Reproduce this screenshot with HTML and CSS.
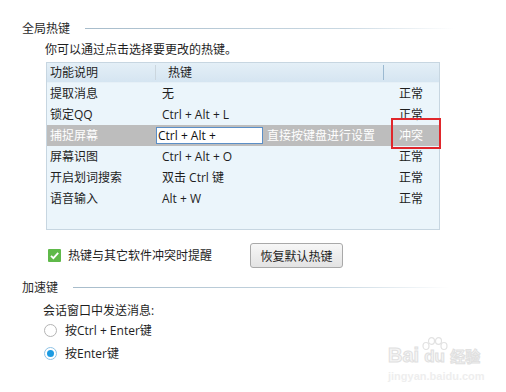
FILE: index.html
```html
<!DOCTYPE html>
<html lang="zh-CN">
<head>
  <meta charset="UTF-8">
  <title>热键设置</title>
  <link rel="stylesheet" href="styles.css">
</head>
<body>
  <div class="panel">
    <div class="section-title first"><span>全局热键</span><i class="rule"></i></div>
    <p class="hint">你可以通过点击选择要更改的热键。</p>

    <div class="hotkeys">
      <div class="row head">
        <div class="cell name">功能说明</div>
        <div class="cell key">热键</div>
        <div class="cell state"></div>
      </div>
      <div class="row">
        <div class="cell name">提取消息</div>
        <div class="cell key">无</div>
        <div class="cell state">正常</div>
      </div>
      <div class="row">
        <div class="cell name">锁定QQ</div>
        <div class="cell key">Ctrl + Alt + L</div>
        <div class="cell state">正常</div>
      </div>
      <div class="row selected">
        <div class="cell name">捕捉屏幕</div>
        <div class="cell key">
          <span class="key-input">Ctrl + Alt +</span>
          <span class="key-tip">直接按键盘进行设置</span>
        </div>
        <div class="cell state">冲突<span class="conflict-mark"></span></div>
      </div>
      <div class="row">
        <div class="cell name">屏幕识图</div>
        <div class="cell key">Ctrl + Alt + O</div>
        <div class="cell state">正常</div>
      </div>
      <div class="row">
        <div class="cell name">开启划词搜索</div>
        <div class="cell key">双击 Ctrl 键</div>
        <div class="cell state">正常</div>
      </div>
      <div class="row">
        <div class="cell name">语音输入</div>
        <div class="cell key">Alt + W</div>
        <div class="cell state">正常</div>
      </div>
    </div>

    <div class="options">
      <label class="check">
        <span class="checkbox">
          <svg width="13" height="13" viewBox="0 0 13 13"><path d="M3 6.8 L5.4 9.2 L10.2 3.8" fill="none" stroke="#fff" stroke-width="1.8"/></svg>
        </span>
        热键与其它软件冲突时提醒
      </label>
      <button class="btn">恢复默认热键</button>
    </div>

    <div class="section-title second"><span>加速键</span><i class="rule"></i></div>
    <p class="sub">会话窗口中发送消息:</p>
    <div class="radio-row"><span class="radio"></span>按Ctrl + Enter键</div>
    <div class="radio-row two"><span class="radio on"></span>按Enter键</div>
  </div>

  <div class="watermark">
    <div class="wm-logo">
      <span>Bai</span>
      <span class="paw">
        <svg width="28" height="22" viewBox="0 0 28 22">
          <g fill="none" stroke="#e2e2e2" stroke-width="1.2">
            <ellipse cx="5" cy="9" rx="3" ry="3.5"/>
            <ellipse cx="10.5" cy="4" rx="3" ry="3.3"/>
            <ellipse cx="17.5" cy="4" rx="3" ry="3.3"/>
            <ellipse cx="23" cy="9" rx="3" ry="3.5"/>
          </g>
        </svg>
        <span class="du">du</span>
      </span>
      <span class="cn">经验</span>
    </div>
    <div class="wm-url">jingyan.baidu.com</div>
  </div>
</body>
</html>
```

FILE: styles.css
```css
body {
  margin: 0;
  background: #fff;
  font-family: "Open Sans", "Noto Sans CJK SC", sans-serif;
  font-size: 12px;
  color: #1e1e1e;
  width: 506px;
  height: 392px;
  position: relative;
  overflow: hidden;
}

.panel {
  padding: 21px 0 0 22px;
}

.section-title {
  display: flex;
  align-items: center;
  height: 16px;
  line-height: 16px;
  color: #2a2a2a;
}

.section-title .rule {
  flex: 1;
  height: 1px;
  margin-top: -2px;
  background: linear-gradient(to right, #a7bccb, #c9d8e2 70%, rgba(255, 255, 255, 0));
}

.section-title.first .rule {
  margin-left: 15px;
  margin-right: 51px;
}

.section-title.second {
  margin-top: 12px;
}

.section-title.second .rule {
  margin-left: 15px;
  margin-right: 56px;
}

.hint {
  margin: 5px 0 0 23px;
  line-height: 16px;
}

/* hotkey table */
.hotkeys {
  margin: 4px 0 0 24px;
  width: 394px;
  height: 168px;
  box-sizing: border-box;
  border: 1px solid #c7d6e1;
  background: #ebf5fb;
}

.row {
  display: grid;
  grid-template-columns: 108px 228px 1fr;
  height: 21px;
  align-items: center;
  line-height: 16px;
}

.row.head {
  height: 20px;
  background: linear-gradient(#e4eff7, #d5e5f1);
  border-bottom: 1px solid #e6f0f7;
  box-sizing: border-box;
}

.cell.name {
  padding-left: 3px;
}

.cell.key {
  padding-left: 7px;
  white-space: nowrap;
}

.cell.state {
  text-align: center;
  position: relative;
  height: 21px;
  line-height: 21px;
}

.head .cell {
  height: 15px;
  line-height: 15px;
}

.head .cell.key {
  padding-left: 12px;
  border-left: 1px solid #cbd6de;
}

.head .cell.state {
  border-left: 1px solid #9bb9d1;
}

.row.selected {
  background: #bdbdbd;
  color: #fff;
}

.selected .cell.key {
  padding-left: 1px;
  display: flex;
  align-items: center;
}

.key-input {
  display: inline-block;
  width: 107px;
  height: 17px;
  box-sizing: border-box;
  border: 1px solid #5b8fc7;
  background: #fff;
  color: #111;
  line-height: 15px;
  padding-left: 1px;
}

.key-tip {
  margin-left: 4px;
}

.conflict-mark {
  position: absolute;
  left: 8px;
  top: -7px;
  width: 50px;
  height: 31px;
  box-sizing: border-box;
  border: 2px solid #e0262b;
}

/* options */
.options {
  display: flex;
  align-items: center;
  height: 25px;
  margin: 13px 0 0 26px;
}

.check {
  display: flex;
  align-items: center;
  width: 202px;
  line-height: 16px;
}

.checkbox {
  width: 13px;
  height: 13px;
  margin-right: 7px;
  background: #5fb94a;
  border-radius: 1px;
}

.checkbox svg {
  display: block;
}

.btn {
  width: 93px;
  height: 25px;
  padding: 0;
  font-family: inherit;
  font-size: 12px;
  color: #1e1e1e;
  border: 1px solid #a9a9a9;
  border-radius: 3px;
  background: linear-gradient(#f7f7f7, #e3e3e3);
}

.sub {
  margin: 7px 0 0 21px;
  line-height: 16px;
}

.radio-row {
  display: flex;
  align-items: center;
  height: 20px;
  margin: 1px 0 0 22px;
}

.radio-row.two {
  margin-top: 3px;
}

.radio {
  width: 13px;
  height: 13px;
  box-sizing: border-box;
  border: 1px solid #b4b4b4;
  border-radius: 50%;
  background: #fff;
  margin-right: 8px;
  position: relative;
}

.radio.on {
  border-color: #8fc3e6;
}

.radio.on::after {
  content: "";
  position: absolute;
  left: 2px;
  top: 2px;
  width: 7px;
  height: 7px;
  border-radius: 50%;
  background: #1c9be2;
}

/* watermark */
.watermark {
  position: absolute;
  left: 388px;
  top: 337px;
  width: 100px;
  color: #f6f6f6;
  white-space: nowrap;
}

.wm-logo {
  display: flex;
  align-items: flex-end;
  height: 28px;
  font-family: "Liberation Sans", sans-serif;
  font-weight: bold;
  font-size: 20px;
  line-height: 20px;
  -webkit-text-stroke: 1px #e0e0e0;
}

.paw {
  position: relative;
  width: 28px;
  height: 28px;
  margin-left: 2px;
}

.paw svg {
  display: block;
}

.paw .du {
  position: absolute;
  left: 3px;
  bottom: 0;
  font-size: 17px;
  line-height: 17px;
}

.wm-logo .cn {
  font-family: "Noto Sans CJK SC", sans-serif;
  font-size: 15px;
  line-height: 18px;
  margin-left: 1px;
}

.wm-url {
  font-family: "Liberation Sans", sans-serif;
  font-size: 11px;
  font-weight: bold;
  color: #eeeeee;
  margin-top: 5px;
}
```
